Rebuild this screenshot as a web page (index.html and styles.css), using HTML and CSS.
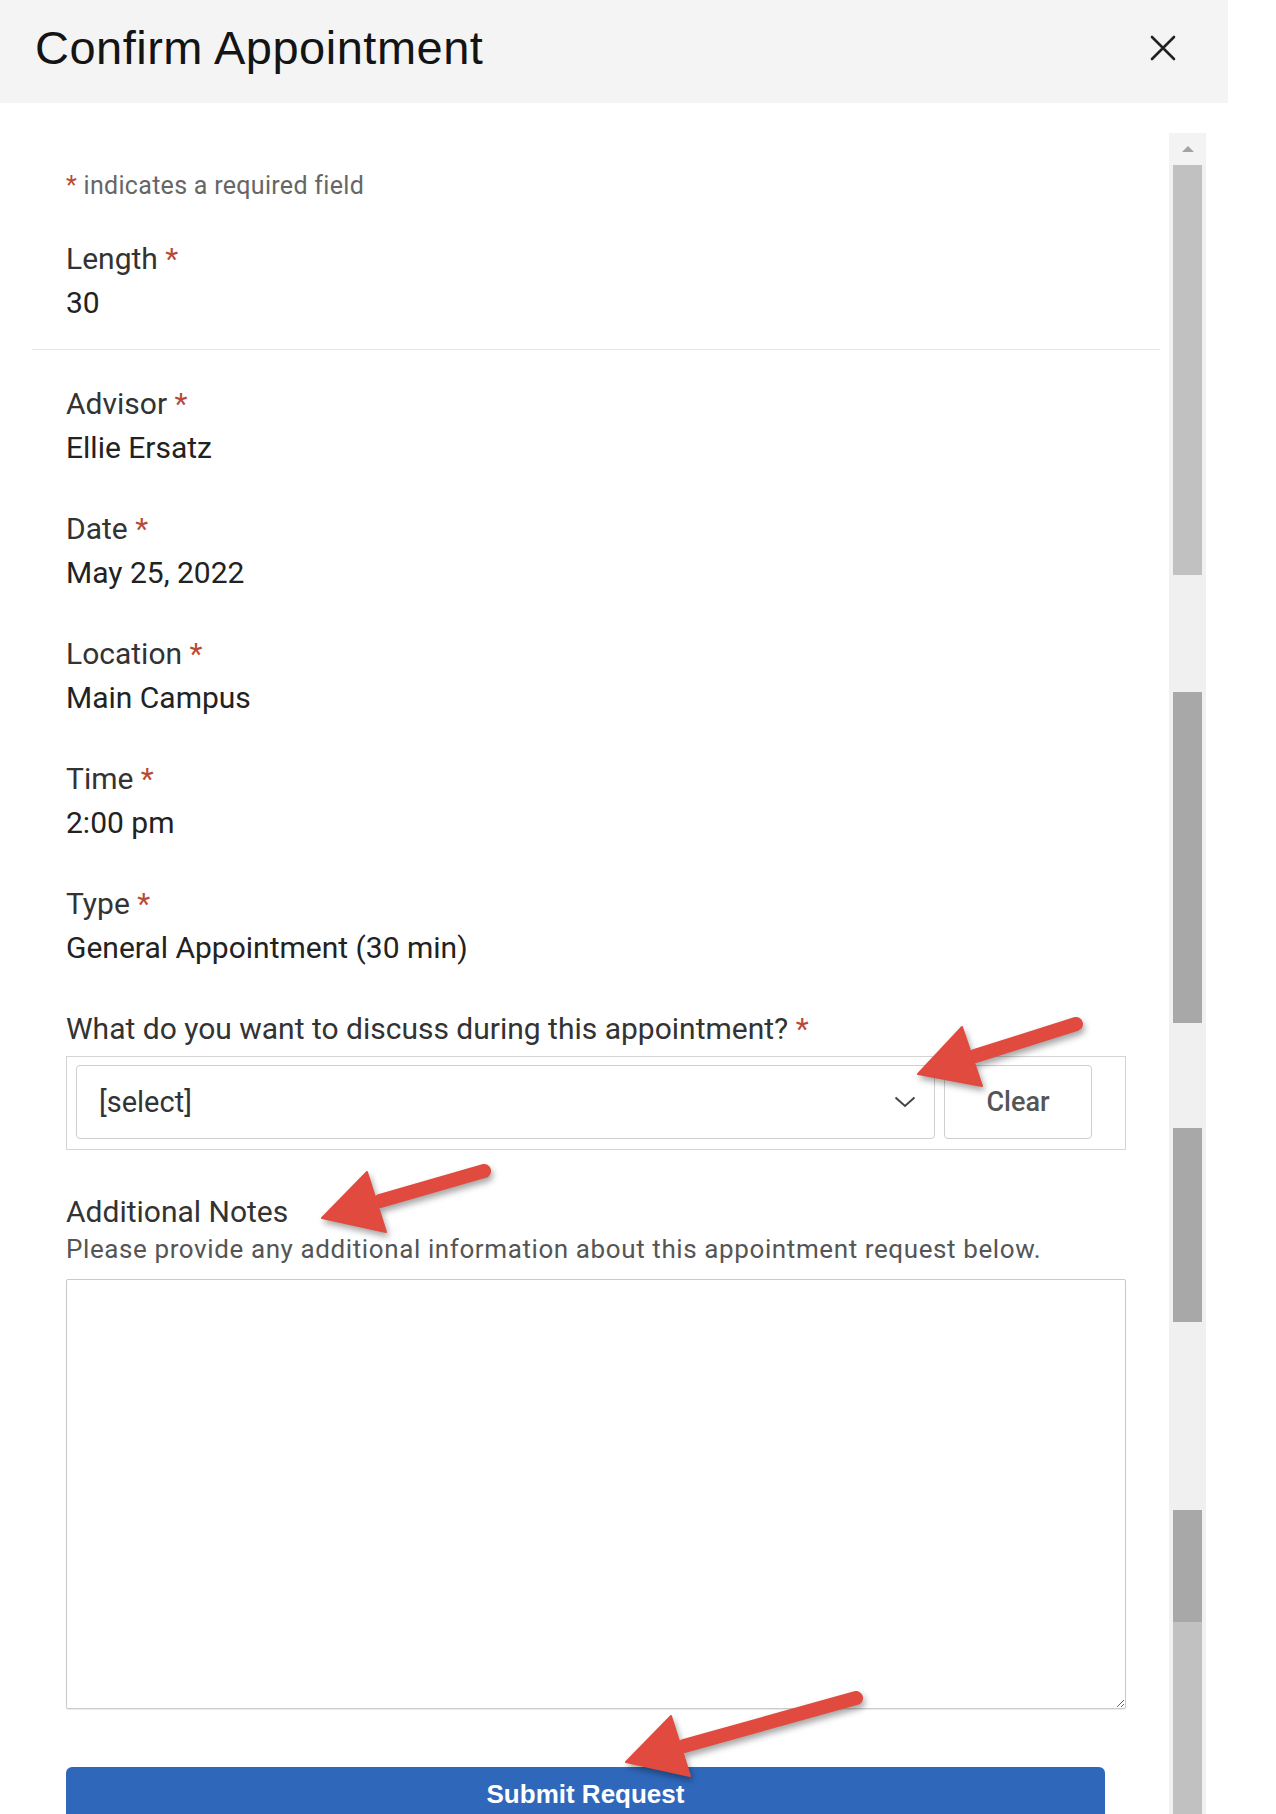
FILE: index.html
```html
<!DOCTYPE html>
<html lang="en">
<head>
<meta charset="utf-8">
<title>Confirm Appointment</title>
<link rel="stylesheet" href="styles.css">
</head>
<body>
<div class="modal">
  <header class="modal-header">
    <h1 class="title">Confirm Appointment</h1>
    <button class="close" aria-label="Close">
      <svg width="26" height="26" viewBox="0 0 26 26"><path d="M2 2 L24 24 M24 2 L2 24" stroke="#222" stroke-width="2.6" fill="none" stroke-linecap="round"/></svg>
    </button>
  </header>
  <div class="modal-body">
    <div class="content">
      <p class="req-note"><span class="req">*</span> indicates a required field</p>
      <div class="field">
        <div class="label">Length <span class="req">*</span></div>
        <div class="value">30</div>
      </div>
      <hr class="divider">
      <div class="field">
        <div class="label">Advisor <span class="req">*</span></div>
        <div class="value">Ellie Ersatz</div>
      </div>
      <div class="field">
        <div class="label">Date <span class="req">*</span></div>
        <div class="value">May 25, 2022</div>
      </div>
      <div class="field">
        <div class="label">Location <span class="req">*</span></div>
        <div class="value">Main Campus</div>
      </div>
      <div class="field">
        <div class="label">Time <span class="req">*</span></div>
        <div class="value">2:00 pm</div>
      </div>
      <div class="field">
        <div class="label">Type <span class="req">*</span></div>
        <div class="value">General Appointment (30 min)</div>
      </div>
      <div class="field question">
        <div class="label">What do you want to discuss during this appointment? <span class="req">*</span></div>
        <div class="select-group">
          <div class="select">
            <span class="select-text">[select]</span>
            <svg class="chevron" width="22" height="12" viewBox="0 0 22 12"><path d="M1.5 1.5 L11 10 L20.5 1.5" stroke="#444" stroke-width="2" fill="none"/></svg>
          </div>
          <button class="clear">Clear</button>
        </div>
      </div>
      <div class="notes">
        <div class="label">Additional Notes</div>
        <div class="help">Please provide any additional information about this appointment request below.</div>
        <textarea class="notes-input" aria-label="Additional Notes"></textarea>
      </div>
      <button class="submit">Submit Request</button>
    </div>
    <div class="scrollbar">
      <div class="sb-up"><span class="sb-arrow"></span></div>
      <div class="sb-seg thumb-light s1"></div>
      <div class="sb-seg track s2"></div>
      <div class="sb-seg thumb-dark s3"></div>
      <div class="sb-seg track s4"></div>
      <div class="sb-seg thumb-dark s5"></div>
      <div class="sb-seg track s6"></div>
      <div class="sb-seg thumb-dark s7"></div>
      <div class="sb-seg thumb-light s8"></div>
    </div>
  </div>
  <svg class="annotations" width="1276" height="1814" viewBox="0 0 1276 1814">
    <g class="arrow">
      <line x1="1076" y1="1024" x2="975" y2="1056" />
      <polygon points="918,1074 962,1027 982,1086" />
    </g>
    <g class="arrow">
      <line x1="484" y1="1171" x2="380" y2="1201" />
      <polygon points="322,1218 367,1172 386,1232" />
    </g>
    <g class="arrow">
      <line x1="856" y1="1698" x2="684" y2="1746" />
      <polygon points="626,1762 671,1716 690,1776" />
    </g>
  </svg>
</div>
</body>
</html>
```

FILE: styles.css
```css
* {
  box-sizing: border-box;
}

html, body {
  margin: 0;
  padding: 0;
  background: #ffffff;
}

body {
  font-family: "Roboto", "Liberation Sans", sans-serif;
  color: #2a2a2a;
}

.modal {
  position: relative;
  width: 1276px;
  height: 1814px;
  overflow: hidden;
}

.modal-header {
  width: 1228px;
  height: 103px;
  background: #f4f4f4;
  display: flex;
  align-items: center;
  justify-content: space-between;
  padding: 0 52px 0 35px;
}

.title {
  margin: 0;
  font-family: "Liberation Sans", Arial, sans-serif;
  font-weight: 400;
  font-size: 47px;
  color: #141414;
  letter-spacing: 0.5px;
  line-height: 1;
  position: relative;
  top: -4px;
}

.close {
  border: 0;
  background: transparent;
  padding: 0;
  width: 26px;
  height: 26px;
  display: flex;
  position: relative;
  top: -4px;
}

.modal-body {
  display: flex;
  align-items: flex-start;
}

.content {
  margin-left: 32px;
  width: 1128px;
  padding: 68px 34px 0 34px;
}

.req-note {
  margin: 0;
  font-size: 25px;
  line-height: 30px;
  color: #666;
  letter-spacing: 0.3px;
}

.req {
  color: #b84a35;
}

.field {
  margin-top: 37px;
}

.req-note + .field {
  margin-top: 36px;
}

.label {
  font-size: 30px;
  line-height: 44px;
  color: #333;
}

.value {
  font-size: 30px;
  line-height: 44px;
  color: #222;
}

.divider {
  border: 0;
  border-top: 1px solid #e6e6e6;
  margin: 24px -34px 32px -34px;
}

.divider + .field {
  margin-top: 0;
}

.select-group {
  margin-top: 5px;
  border: 1px solid #d4d4d4;
  padding: 8px 33px 10px 9px;
  display: flex;
  gap: 9px;
}

.select {
  width: 859px;
  height: 74px;
  border: 1px solid #cfcfcf;
  border-radius: 4px;
  display: flex;
  align-items: center;
  justify-content: space-between;
  padding: 0 18px 0 22px;
}

.select-text {
  font-size: 29px;
  color: #333;
}

.chevron {
  display: block;
}

.clear {
  width: 148px;
  height: 74px;
  border: 1px solid #cfcfcf;
  border-radius: 4px;
  background: #fff;
  font-family: "Roboto", "Liberation Sans", sans-serif;
  font-weight: 500;
  font-size: 27px;
  color: #555;
}

.notes {
  margin-top: 40px;
}

.help {
  font-size: 26px;
  line-height: 30px;
  color: #555;
  letter-spacing: 0.6px;
}

.notes-input {
  display: block;
  margin-top: 15px;
  width: 1060px;
  height: 430px;
  border: 1px solid #cacaca;
  border-radius: 2px;
  box-shadow: 0 1px 1px rgba(0, 0, 0, 0.08);
  resize: both;
  font-family: inherit;
}

.submit {
  display: block;
  margin-top: 58px;
  width: 1039px;
  height: 56px;
  border: 0;
  border-radius: 6px;
  background: #2f68bb;
  color: #fff;
  font-family: "Liberation Sans", Arial, sans-serif;
  font-weight: 700;
  font-size: 26px;
  padding: 0 0 2px 0;
}

.scrollbar {
  margin-left: 9px;
  margin-top: 30px;
  width: 37px;
  background: #f1f1f1;
  display: flex;
  flex-direction: column;
}

.sb-up {
  height: 32px;
  display: flex;
  align-items: center;
  justify-content: center;
  background: #f3f3f3;
}

.sb-arrow {
  width: 0;
  height: 0;
  border-left: 6px solid transparent;
  border-right: 6px solid transparent;
  border-bottom: 6px solid #a3a3a3;
}

.sb-seg {
  margin: 0 4px;
}

.thumb-light {
  background: #c1c1c1;
}

.thumb-dark {
  background: #a8a8a8;
}

.track {
  background: #f0f0f0;
  margin: 0;
}

.s1 { height: 410px; }
.s2 { height: 117px; }
.s3 { height: 331px; }
.s4 { height: 105px; }
.s5 { height: 194px; }
.s6 { height: 188px; }
.s7 { height: 112px; }
.s8 { height: 200px; }

.annotations {
  position: absolute;
  top: 0;
  left: 0;
  pointer-events: none;
}

.arrow {
  filter: drop-shadow(2px 4px 3px rgba(0, 0, 0, 0.35));
}

.arrow line {
  stroke: #e14a3f;
  stroke-width: 14;
  stroke-linecap: round;
}

.arrow polygon {
  fill: #e14a3f;
  stroke: #e14a3f;
  stroke-width: 2;
  stroke-linejoin: round;
}
```
